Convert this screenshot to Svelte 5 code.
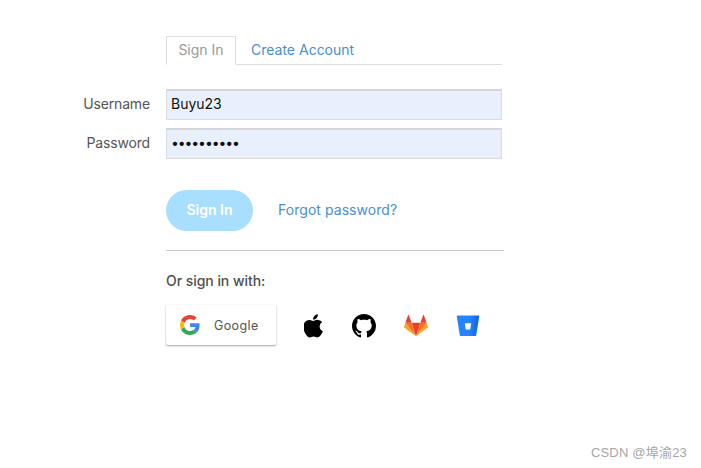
<script>
  const dots = '••••••••••';
</script>

<main class="page">
  <div class="col">
    <nav class="tabs">
      <span class="tab active">Sign In</span>
      <span class="tab link">Create Account</span>
    </nav>

    <div class="row first">
      <span class="label">Username</span>
      <div class="input name">Buyu23</div>
    </div>
    <div class="row second">
      <span class="label">Password</span>
      <div class="input pass">{dots}</div>
    </div>

    <div class="actions">
      <span class="btn">Sign In</span>
      <span class="link forgot">Forgot password?</span>
    </div>

    <hr class="rule" />

    <div class="or">Or sign in with:</div>

    <div class="social">
      <div class="google">
        <svg width="20" height="20" viewBox="0 0 48 48">
          <path fill="#EA4335" d="M24 9.5c3.54 0 6.71 1.22 9.21 3.6l6.85-6.85C35.9 2.38 30.47 0 24 0 14.62 0 6.51 5.38 2.56 13.22l7.98 6.19C12.43 13.72 17.74 9.5 24 9.5z"/>
          <path fill="#4285F4" d="M46.98 24.55c0-1.57-.15-3.09-.38-4.55H24v9.02h12.94c-.58 2.96-2.26 5.48-4.78 7.18l7.73 6c4.51-4.18 7.09-10.36 7.09-17.65z"/>
          <path fill="#FBBC05" d="M10.53 28.59c-.48-1.45-.76-2.99-.76-4.59s.27-3.14.76-4.59l-7.98-6.19C.92 16.46 0 20.12 0 24c0 3.88.92 7.54 2.56 10.78l7.97-6.19z"/>
          <path fill="#34A853" d="M24 48c6.48 0 11.93-2.13 15.89-5.81l-7.73-6c-2.15 1.45-4.92 2.3-8.16 2.3-6.26 0-11.57-4.22-13.47-9.91l-7.98 6.19C6.51 42.62 14.62 48 24 48z"/>
        </svg>
        <span class="gtext">Google</span>
      </div>

      <svg class="ic apple" width="20" height="24" viewBox="3.6 1.4 17.2 21.2" preserveAspectRatio="none">
        <path fill="#000" d="M17.05 12.54c-.03-2.6 2.12-3.85 2.22-3.91-1.21-1.77-3.09-2.01-3.76-2.04-1.6-.16-3.12.94-3.93.94-.81 0-2.06-.92-3.39-.89-1.74.03-3.35 1.01-4.25 2.57-1.81 3.14-.46 7.8 1.3 10.35.86 1.25 1.89 2.65 3.24 2.6 1.3-.05 1.79-.84 3.36-.84 1.57 0 2.01.84 3.39.81 1.4-.02 2.28-1.27 3.14-2.53.99-1.45 1.4-2.86 1.42-2.93-.03-.01-2.72-1.04-2.74-4.13zM14.47 4.9c.72-.87 1.2-2.08 1.07-3.28-1.03.04-2.28.69-3.02 1.56-.66.77-1.24 2-1.09 3.18 1.15.09 2.32-.58 3.04-1.46z"/>
      </svg>

      <svg class="ic gh" width="24" height="24" viewBox="0 0 16 16">
        <path fill="#000" d="M8 0C3.58 0 0 3.58 0 8c0 3.54 2.29 6.53 5.47 7.59.4.07.55-.17.55-.38 0-.19-.01-.82-.01-1.49-2.01.37-2.53-.49-2.69-.94-.09-.23-.48-.94-.82-1.13-.28-.15-.68-.52-.01-.53.63-.01 1.08.58 1.23.82.72 1.21 1.87.87 2.33.66.07-.52.28-.87.51-1.07-1.78-.2-3.64-.89-3.64-3.95 0-.87.31-1.59.82-2.15-.08-.2-.36-1.02.08-2.12 0 0 .67-.21 2.2.82.64-.18 1.32-.27 2-.27s1.36.09 2 .27c1.53-1.04 2.2-.82 2.2-.82.44 1.1.16 1.92.08 2.12.51.56.82 1.27.82 2.15 0 3.07-1.87 3.75-3.65 3.95.29.25.54.73.54 1.48 0 1.07-.01 1.93-.01 2.2 0 .21.15.46.55.38A8.01 8.01 0 0 0 16 8c0-4.42-3.58-8-8-8z"/>
      </svg>

      <svg class="ic gl" width="24" height="24" viewBox="0 0 24 24">
        <path fill="#E24329" d="M12 22.2 16.4 8.7H7.6z"/>
        <path fill="#FC6D26" d="M12 22.2 7.6 8.7H1.4z"/>
        <path fill="#FCA326" d="M1.4 8.7.1 12.8c-.12.37.01.78.33 1.01L12 22.2z"/>
        <path fill="#E24329" d="M1.4 8.7h6.2L4.9 1.2c-.14-.4-.7-.4-.84 0z"/>
        <path fill="#FC6D26" d="M12 22.2l4.4-13.5h6.2z"/>
        <path fill="#FCA326" d="m22.6 8.7 1.3 4.1c.12.37-.01.78-.33 1.01L12 22.2z"/>
        <path fill="#E24329" d="M22.6 8.7h-6.2l2.7-7.5c.14-.4.7-.4.84 0z"/>
      </svg>

      <svg class="ic bb" width="24" height="24" viewBox="0 0 24 24">
        <defs>
          <linearGradient id="bbg" x1="0" y1="0" x2="1" y2="0">
            <stop offset="0.55" stop-color="#2684FF" />
            <stop offset="1" stop-color="#0F62E0" />
          </linearGradient>
        </defs>
        <path fill="url(#bbg)" fill-rule="evenodd" d="M1.5 1.6h21c.46 0 .8.4.73.85l-3.05 18.9c-.06.37-.37.65-.74.65H4.6c-.4 0-.73-.29-.8-.68L.77 2.45c-.07-.45.27-.85.73-.85zM8.8 9.2l1 6.2h4.4l1-6.2z"/>
      </svg>
    </div>
  </div>
  <div class="mark">CSDN @埠渝23</div>
</main>

<style>
  :global(body) {
    margin: 0;
    background: #fff;
  }

  .page {
    position: relative;
    width: 701px;
    height: 468px;
    overflow: hidden;
    font-family: Inter, "Liberation Sans", sans-serif;
    font-size: 14px;
    color: #555;
  }

  .col {
    box-sizing: border-box;
    width: 701px;
    padding: 36px 0 0 166px;
  }

  .tabs {
    display: flex;
    width: 336px;
    height: 29px;
    box-sizing: border-box;
    border-bottom: 1px solid #ddd;
  }

  .tab {
    box-sizing: border-box;
    height: 29px;
    line-height: 25px;
    padding: 0 12px;
    font-size: 14px;
  }

  .tab.active {
    width: 70px;
    color: #999;
    border: 1px solid #ddd;
    border-bottom: 1px solid #fff;
    text-align: center;
    padding: 0;
  }

  .tab.link {
    padding: 0 0 0 15px;
    line-height: 27px;
  }

  .link {
    color: #4a8fd0;
  }

  .row {
    position: relative;
    display: flex;
  }

  .first {
    margin-top: 24px;
  }

  .second {
    margin-top: 8px;
  }

  .label {
    position: absolute;
    right: calc(100% + 16px);
    white-space: nowrap;
    line-height: 29px;
    color: #555;
    font-size: 14px;
    letter-spacing: -0.15px;
  }

  .input {
    box-sizing: border-box;
    width: 336px;
    height: 31px;
    padding-left: 4px;
    background: #e8f0fe;
    border: 1px solid #dcdcdc;
    border-top: 2px solid #d6d6d6;
    line-height: 26px;
    color: #111;
    font-size: 14px;
  }

  .pass {
    letter-spacing: -1.1px;
  }

  .actions {
    display: flex;
    align-items: center;
    margin-top: 31px;
    gap: 25px;
  }

  .btn {
    box-sizing: border-box;
    width: 87px;
    height: 41px;
    border-radius: 21px;
    background: #a8dfff;
    color: #fff;
    font-weight: 600;
    text-align: center;
    line-height: 40px;
  }

  .forgot {
    margin-top: -2px;
    letter-spacing: 0.05px;
  }

  .rule {
    width: 338px;
    height: 1px;
    margin: 19px 0 0;
    border: 0;
    background: #ccc;
  }

  .or {
    margin-top: 20px;
    line-height: 19px;
    font-size: 14px;
    font-weight: 500;
    color: #4f4f4f;
    letter-spacing: -0.05px;
  }

  .social {
    display: flex;
    align-items: center;
    margin-top: 15px;
  }

  .google {
    box-sizing: border-box;
    display: flex;
    align-items: center;
    width: 110px;
    height: 40px;
    padding-left: 14px;
    border-radius: 2px;
    background: #fff;
    box-shadow: 0 1px 2px rgba(0, 0, 0, 0.35), 0 0 1px rgba(0, 0, 0, 0.08);
  }

  .gtext {
    margin-left: 14px;
    font-size: 12.5px;
    letter-spacing: 0.4px;
    color: #555;
  }

  .ic {
    margin-top: 2px;
  }

  .apple {
    margin-left: 28px;
  }

  .gh {
    margin-left: 28px;
  }

  .gl {
    margin-left: 28px;
  }

  .bb {
    margin-left: 28px;
  }

  .mark {
    position: absolute;
    right: 14px;
    top: 442px;
    font-family: "Liberation Sans", "Noto Sans CJK SC", sans-serif;
    font-size: 13px;
    color: #a6a6a6;
    letter-spacing: 0.2px;
  }
</style>
